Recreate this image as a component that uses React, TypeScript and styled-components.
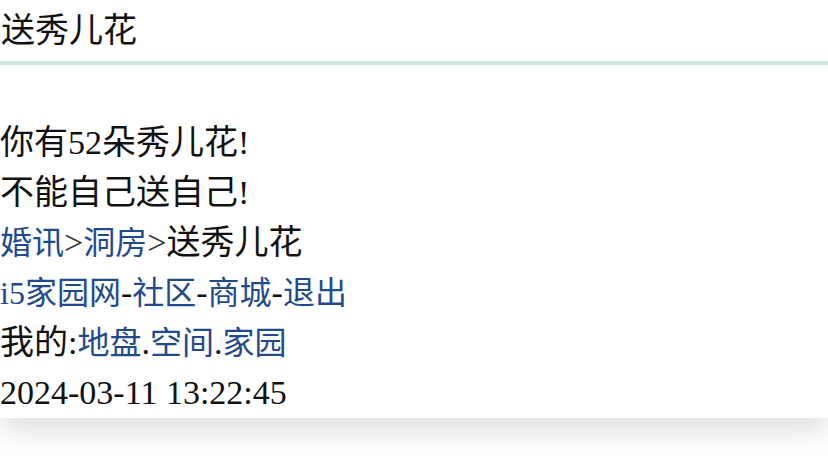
import React from "react";
import styled, { createGlobalStyle } from "styled-components";

const GlobalStyle = createGlobalStyle`
  html, body {
    margin: 0;
    padding: 0;
    background: #fff;
  }
  body {
    font-family: "Liberation Serif", "Noto Sans CJK SC", serif;
    color: #111;
  }
`;

const Page = styled.div`
  min-height: 100vh;
  padding-bottom: 48px;
  box-sizing: border-box;
  background: #fff;
`;

const Card = styled.div`
  position: relative;
  background: #fff;
  box-shadow: 0 10px 30px rgba(0, 0, 0, 0.15);
  font-size: 34px;
`;

const Title = styled.div`
  line-height: 56px;
  padding: 0 0 5px 1px;
  border-bottom: 4px solid #d0e4df;
  font-family: "Noto Sans CJK SC", sans-serif;
`;

const Body = styled.div`
  padding-top: 53px;
`;

const Line = styled.div`
  line-height: 50px;
  white-space: nowrap;
`;

const Link = styled.a`
  color: #1f4a8f;
  font-size: 32px;
  text-decoration: none;
`;

const Sep = styled.span`
  color: #333;
`;

export default function App() {
  return (
    <>
      <GlobalStyle />
      <Page>
        <Card>
          <Title>送秀儿花</Title>
          <Body>
            <Line>你有52朵秀儿花!</Line>
            <Line>不能自己送自己!</Line>
            <Line>
              <Link href="#">婚讯</Link>
              <Sep>&gt;</Sep>
              <Link href="#">洞房</Link>
              <Sep>&gt;</Sep>送秀儿花
            </Line>
            <Line>
              <Link href="#">i5家园网</Link>-<Link href="#">社区</Link>-
              <Link href="#">商城</Link>-<Link href="#">退出</Link>
            </Line>
            <Line>
              我的:<Link href="#">地盘</Link>.<Link href="#">空间</Link>.
              <Link href="#">家园</Link>
            </Line>
            <Line>2024-03-11 13:22:45</Line>
          </Body>
        </Card>
      </Page>
    </>
  );
}
